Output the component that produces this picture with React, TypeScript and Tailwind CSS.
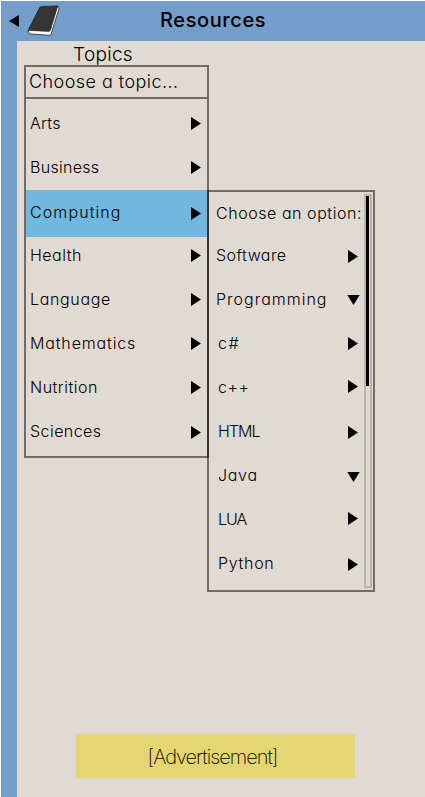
interface Item {
  label: string;
  tracking: string;
  open?: boolean;
  nested?: boolean;
  active?: boolean;
  nudge?: string;
}

const TOPICS: Item[] = [
  { label: 'Arts', tracking: 'tracking-[0.3px]' },
  { label: 'Business', tracking: 'tracking-[0.3px]' },
  { label: 'Computing', tracking: 'tracking-[1.1px]', active: true, nudge: 'mt-[3px]' },
  { label: 'Health', tracking: 'tracking-[0.5px]' },
  { label: 'Language', tracking: 'tracking-[0.65px]' },
  { label: 'Mathematics', tracking: 'tracking-[0.85px]' },
  { label: 'Nutrition', tracking: 'tracking-[0.5px]' },
  { label: 'Sciences', tracking: 'tracking-[0.45px]', nudge: 'mt-[2px]' },
];

const OPTIONS: Item[] = [
  { label: 'Software', tracking: 'tracking-[0.45px]', nudge: 'mt-[2px]' },
  { label: 'Programming', tracking: 'tracking-[1px]', open: true, nudge: 'mt-[2px]' },
  { label: 'c#', tracking: 'tracking-[1.5px]', nested: true },
  { label: 'c++', tracking: 'tracking-[0.6px]', nested: true, nudge: '-mt-[2px]' },
  { label: 'HTML', tracking: 'tracking-[-1px]', nested: true, nudge: 'mt-[2px]' },
  { label: 'Java', tracking: 'tracking-[0.7px]', nested: true, open: true, nudge: 'mt-[3px]' },
  { label: 'LUA', tracking: 'tracking-[-1px]', nested: true, nudge: '-mt-[2px]' },
  { label: 'Python', tracking: 'tracking-[0.7px]', nested: true, nudge: 'mt-[2px]' },
];

function Caret({ open, className = '' }: { open?: boolean; className?: string }) {
  return open ? (
    <svg width="13" height="10" viewBox="0 0 13 10" className={`-mr-[2px] shrink-0 ${className}`}>
      <path d="M0.3 0H12.7L6.5 10Z" />
    </svg>
  ) : (
    <svg width="10" height="13" viewBox="0 0 10 13" className={`shrink-0 ${className}`}>
      <path d="M0 0L10 6.5L0 13Z" />
    </svg>
  );
}

function Book() {
  return (
    <svg width="34" height="32" viewBox="0 0 34 32" className="ml-[8px]">
      <path d="M13.3 2.5L30.5 1.2L32 3.8L23.6 30.4L2.4 28.8L1 25.6Z" fill="#fff" stroke="#111" strokeWidth="0.7" strokeLinejoin="round" />
      <path d="M12.4 3Q13 1.7 14.4 1.5L30.8 0.9L23.4 25.2L22.2 26.4L1.2 25.4Z" fill="#353535" stroke="#1c1c1c" strokeWidth="0.6" strokeLinejoin="round" />
    </svg>
  );
}

function OptionsMenu() {
  return (
    <div className="absolute left-[183px] top-[125px] flex h-[402px] w-[168px] border-2 border-black/50">
      <div className="w-[155px] shrink-0">
        <div className="flex h-[41px] items-center whitespace-nowrap pl-[7px] pt-px tracking-[0.55px]">Choose an option:</div>
        <ul>
          {OPTIONS.map(o => (
            <li key={o.label} className={`flex h-11 items-center justify-between pr-[6px] ${o.nested ? 'pl-[9px]' : 'pl-[7px]'}`}>
              <span className={o.tracking}>{o.label}</span>
              <Caret open={o.open} className={o.nudge} />
            </li>
          ))}
        </ul>
      </div>
      <div className="mb-[2px] mt-[2px] w-[8px] shrink-0 border-2 border-[#bbb1ae]">
        <div className="h-[190px] w-[3px] bg-black" />
      </div>
    </div>
  );
}

function TopicsMenu() {
  return (
    <div className="h-[393px] w-[185px] border-2 border-black/50">
      <div className="flex h-8 items-center border-b-2 border-black/50 pl-[3px] pb-px text-[18px] tracking-[0.45px]">Choose a topic...</div>
      <ul className="pt-[2px]">
        {TOPICS.map(t => (
          <li key={t.label} className={t.active ? '-mb-[4px] mt-px h-[47px] bg-[#70b8df]' : 'h-11'}>
            <div className={`flex items-center justify-between pl-[4px] pr-[6px] ${t.active ? 'h-[43px]' : 'h-11'}`}>
              <span className={t.tracking}>{t.label}</span>
              <Caret className={t.nudge} />
            </div>
          </li>
        ))}
      </ul>
    </div>
  );
}

export default function App() {
  return (
    <div className="flex h-[797px] w-[425px] flex-col overflow-hidden bg-white pl-px pt-px font-['Inter','Open_Sans',sans-serif] text-[16px] font-light leading-6 text-black [font-feature-settings:'cv11']">
      <header className="flex h-10 shrink-0 items-center bg-[#759dca]">
        <svg width="10" height="12" viewBox="0 0 10 12" className="ml-[8px]">
          <path d="M10 0V12L0 6Z" />
        </svg>
        <Book />
        <h1 className="ml-[99px] pb-[2px] text-[20px] font-medium tracking-[0.6px]">Resources</h1>
      </header>
      <div className="flex flex-1">
        <div className="w-4 shrink-0 bg-[#759dca]" />
        <main className="flex flex-1 flex-col bg-[#e1dad3]">
          <div className="ml-[7px] w-[185px]">
            <h2 className="h-6 pl-[49px] pt-[2px] text-[19px] font-[350] tracking-[0.3px]">Topics</h2>
            <div className="relative">
              <TopicsMenu />
              <OptionsMenu />
            </div>
          </div>
          <div className="mb-[19px] ml-[59px] mt-auto flex h-11 w-[279px] items-center justify-center bg-[#e4d670] pr-[6px] pt-[2px] text-[20px] font-extralight tracking-[-1px]">
            [Advertisement]
          </div>
        </main>
      </div>
    </div>
  );
}
